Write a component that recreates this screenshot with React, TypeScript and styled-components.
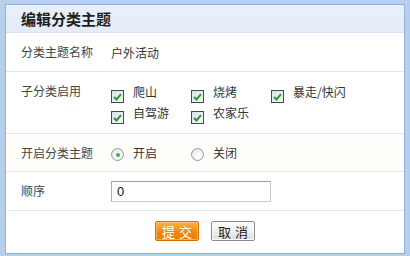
import React from "react";
import styled, { createGlobalStyle } from "styled-components";

const Global = createGlobalStyle`
  html, body { margin: 0; padding: 0; background: #b8cfeb; }
  body { font-family: "Noto Sans CJK SC", "Liberation Sans", sans-serif; font-size: 12px; color: #333; }
`;

const Frame = styled.div`
  width: 410px;
  height: 256px;
  box-sizing: border-box;
  padding: 4px 5px 2px 5px;
  background: #b8cfeb;
`;

const Panel = styled.div`
  box-sizing: border-box;
  height: 250px;
  border: 1px solid #8fb1dd;
  background: #fff;
  display: flex;
  flex-direction: column;
`;

const Header = styled.div`
  height: 27px;
  border-bottom: 1px solid #d6e2f0;
  background: linear-gradient(#e9f0fa, #e3ecf8);
  display: flex;
  align-items: center;
  padding-left: 15px;
  font-size: 15px;
  font-weight: bold;
  color: #1f1f1f;
`;

const Row = styled.div<{ $h: number; $top?: boolean; $tint?: boolean }>`
  height: ${(p) => p.$h}px;
  border-bottom: 1px solid #dfe8f1;
  display: flex;
  align-items: ${(p) => (p.$top ? "flex-start" : "center")};
  background: ${(p) => (p.$tint ? "#fffefa" : "#fff")};
`;

const Label = styled.div<{ $pt?: number }>`
  width: 90px;
  padding-left: 15px;
  padding-top: ${(p) => p.$pt ?? 0}px;
  color: #444;
  line-height: 14px;
`;

const Value = styled.div`
  color: #333;
`;

const CheckGrid = styled.div`
  display: grid;
  grid-template-columns: repeat(3, 80px);
  row-gap: 8px;
  padding-top: 17px;
`;

const CheckItem = styled.label`
  display: flex;
  align-items: flex-start;
  height: 13px;
  color: #333;
  line-height: 12px;
`;

const Box = styled.span`
  width: 11px;
  height: 11px;
  border: 1px solid #3a4c60;
  background: linear-gradient(135deg, #d9e0e8, #f7f9fb);
  display: flex;
  align-items: center;
  justify-content: center;
  margin-right: 9px;
  margin-top: 1px;
  flex-shrink: 0;
`;

const ItemText = styled.span`
  margin-top: -3px;
`;

const RadioGroup = styled.div`
  display: grid;
  grid-template-columns: repeat(2, 80px);
`;

const RadioItem = styled.label`
  display: flex;
  align-items: center;
  color: #333;
`;

const Circle = styled.span<{ $on?: boolean }>`
  width: 11px;
  height: 11px;
  border-radius: 50%;
  border: 1px solid #8c99a8;
  background: radial-gradient(circle at 60% 65%, #fff 0%, #f2f4f6 45%, #d5dbe2 100%);
  display: flex;
  align-items: center;
  justify-content: center;
  margin-right: 9px;
  margin-top: 4px;
  &::after {
    content: "";
    display: ${(p) => (p.$on ? "block" : "none")};
    width: 4px;
    height: 4px;
    border-radius: 50%;
    background: #3fae3f;
  }
`;

const Input = styled.div`
  box-sizing: border-box;
  width: 160px;
  height: 21px;
  border: 1px solid #c9ced3;
  border-top-color: #9a9fa5;
  border-left-color: #a9aeb3;
  padding-left: 5px;
  display: flex;
  align-items: center;
  font-family: "Liberation Sans", sans-serif;
  font-size: 13px;
  color: #111;
`;

const Footer = styled.div`
  flex: 1;
  display: flex;
  justify-content: center;
  align-items: flex-start;
  padding-top: 10px;
  gap: 12px;
`;

const Btn = styled.div<{ $primary?: boolean }>`
  box-sizing: border-box;
  width: 44px;
  height: 20px;
  display: flex;
  align-items: center;
  justify-content: center;
  font-size: 13px;
  letter-spacing: 4px;
  padding-left: 4px;
  border: 1px solid ${(p) => (p.$primary ? "#d26d00" : "#8a8a8a")};
  border-radius: 2px;
  color: ${(p) => (p.$primary ? "#fff" : "#222")};
  background: ${(p) =>
    p.$primary
      ? "linear-gradient(#fbb441, #f08a0c 55%, #e77d00)"
      : "linear-gradient(#fdfdfd, #eeeeee 55%, #dcdcdc)"};
  box-shadow: inset 0 0 0 1px ${(p) => (p.$primary ? "rgba(255,210,140,0.6)" : "#fff")};
`;

const Check = () => (
  <svg width="9" height="8" viewBox="0 0 9 8">
    <path d="M1 4 L3.5 6.5 L8 1.2" stroke="#2f9a2f" strokeWidth="2" fill="none" />
  </svg>
);

const subs = ["爬山", "烧烤", "暴走/快闪", "自驾游", "农家乐"];

export default function App() {
  return (
    <>
      <Global />
      <Frame>
        <Panel>
          <Header>编辑分类主题</Header>
          <Row $h={38}>
            <Label>分类主题名称</Label>
            <Value>户外活动</Value>
          </Row>
          <Row $h={61} $top>
            <Label $pt={12}>子分类启用</Label>
            <CheckGrid>
              {subs.map((s) => (
                <CheckItem key={s}>
                  <Box>
                    <Check />
                  </Box>
                  <ItemText>{s}</ItemText>
                </CheckItem>
              ))}
            </CheckGrid>
          </Row>
          <Row $h={37} $tint>
            <Label>开启分类主题</Label>
            <RadioGroup>
              <RadioItem>
                <Circle $on />
                开启
              </RadioItem>
              <RadioItem>
                <Circle />
                关闭
              </RadioItem>
            </RadioGroup>
          </Row>
          <Row $h={38}>
            <Label>顺序</Label>
            <Input>0</Input>
          </Row>
          <Footer>
            <Btn $primary>提交</Btn>
            <Btn>取消</Btn>
          </Footer>
        </Panel>
      </Frame>
    </>
  );
}
